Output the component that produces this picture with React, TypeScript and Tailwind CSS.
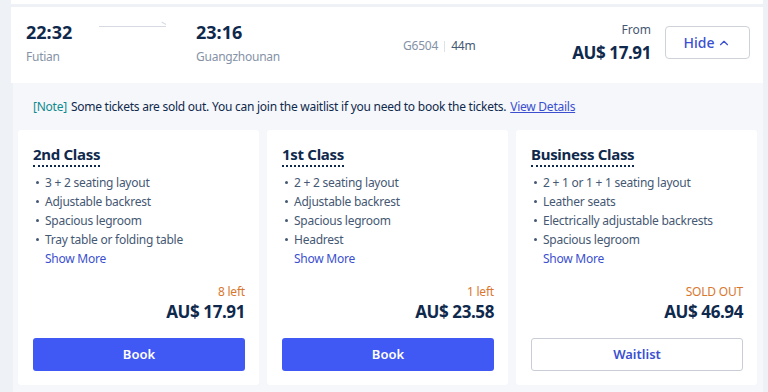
import { ChevronUp } from "lucide-react";

const classes = [
  {
    name: "2nd Class",
    features: ["3 + 2 seating layout", "Adjustable backrest", "Spacious legroom", "Tray table or folding table"],
    stock: "8 left",
    price: "AU$ 17.91",
    soldOut: false,
  },
  {
    name: "1st Class",
    features: ["2 + 2 seating layout", "Adjustable backrest", "Spacious legroom", "Headrest"],
    stock: "1 left",
    price: "AU$ 23.58",
    soldOut: false,
  },
  {
    name: "Business Class",
    features: ["2 + 1 or 1 + 1 seating layout", "Leather seats", "Electrically adjustable backrests", "Spacious legroom"],
    stock: "SOLD OUT",
    price: "AU$ 46.94",
    soldOut: true,
  },
];

export default function App() {
  return (
    <div className="w-[768px] h-[392px] overflow-hidden bg-[#eef1f6] pl-[11px] pr-[5px] font-['Noto_Sans',sans-serif] text-[#0f294d]">
      {/* tail of previous row */}
      <div className="h-[4px] bg-white" />

      {/* Train row */}
      <div className="mt-[3px] h-[76px] bg-white flex items-center pl-[15px] pr-[13px] pb-[5px]">
        <div className="w-[70px]">
          <div className="text-[18px] font-bold leading-[24px]">22:32</div>
          <div className="text-[12px] tracking-[-0.25px] text-[#8592a6] leading-[18px] mt-[4px]">Futian</div>
        </div>
        <div className="w-[100px] h-[24px] flex items-center self-start mt-[7px]">
          <div className="ml-[3px] w-[67px] h-px bg-[#d5dae3] relative">
            <span className="absolute right-0 -top-[2px] w-[5px] h-px bg-[#d5dae3] rotate-[30deg] origin-right" />
          </div>
        </div>
        <div className="w-[207px]">
          <div className="text-[18px] font-bold leading-[24px]">23:16</div>
          <div className="text-[12px] tracking-[-0.25px] text-[#8592a6] leading-[18px] mt-[4px]">Guangzhounan</div>
        </div>
        <div className="flex items-center text-[12px] tracking-[-0.2px] mt-[7px]">
          <span className="text-[#8592a6]">G6504</span>
          <span className="mx-[6px] w-px h-[11px] bg-[#dde1e8]" />
          <span className="text-[#455873]">44m</span>
        </div>
        <div className="ml-auto text-right mr-[14px]">
          <div className="text-[12px] text-[#455873] leading-[18px]">From</div>
          <div className="text-[17px] tracking-[-0.4px] font-bold leading-[24px] mt-[2px]">AU$ 17.91</div>
        </div>
        <button className="w-[85px] h-[33px] rounded-[4px] border border-[#ced2d9] bg-white flex items-center justify-center gap-[3px] text-[14px] font-medium text-[#3b4fd0]">
          Hide
          <ChevronUp size={14} strokeWidth={2} />
        </button>
      </div>

      {/* Expanded panel */}
      <div className="ml-[2px] h-[309px] bg-[#f5f7fa] pl-[5px] pr-[6px]">
        <div className="h-[47px] flex items-center px-[15px] text-[12px] tracking-[-0.25px] text-[#0f294d]">
          <span className="text-[#0e8a8f]">[Note]</span>
          <span className="ml-[4px]">Some tickets are sold out. You can join the waitlist if you need to book the tickets.</span>
          <a className="ml-[4px] text-[#3b4fd0] underline">View Details</a>
        </div>

        <div className="grid grid-cols-3 gap-[8px]">
          {classes.map((c) => (
            <div key={c.name} className="h-[255px] bg-white rounded-[3px] flex flex-col pt-[14px] pb-[14px] pl-[15px] pr-[14px]">
              <div className="self-start text-[15px] tracking-[-0.3px] font-bold leading-[20px] border-b-2 border-dotted border-[#0f294d] pb-[1px]">
                {c.name}
              </div>
              <ul className="mt-[6px] pl-[3px]">
                {c.features.map((f) => (
                  <li key={f} className="flex items-center text-[12px] tracking-[-0.25px] leading-[19px] text-[#455873]">
                    <span className="w-[3px] h-[3px] rounded-full bg-[#455873] mr-[6px]" />
                    {f}
                  </li>
                ))}
              </ul>
              <div className="pl-[12px] text-[12px] tracking-[-0.25px] leading-[19px] text-[#3b4fd0]">Show More</div>
              <div className="mt-auto text-right">
                <div className="text-[12px] tracking-[-0.2px] leading-[17px] text-[#d9772f]">{c.stock}</div>
                <div className="text-[17px] tracking-[-0.4px] font-bold leading-[24px]">{c.price}</div>
              </div>
              <button
                className={
                  c.soldOut
                    ? "mt-[14px] h-[33px] rounded-[3px] border border-[#c8cdd6] bg-white text-[13px] font-semibold text-[#3b4fd0]"
                    : "mt-[14px] h-[33px] rounded-[3px] bg-[#4059f5] text-[13px] font-semibold text-white"
                }
              >
                {c.soldOut ? "Waitlist" : "Book"}
              </button>
            </div>
          ))}
        </div>
      </div>
    </div>
  );
}
